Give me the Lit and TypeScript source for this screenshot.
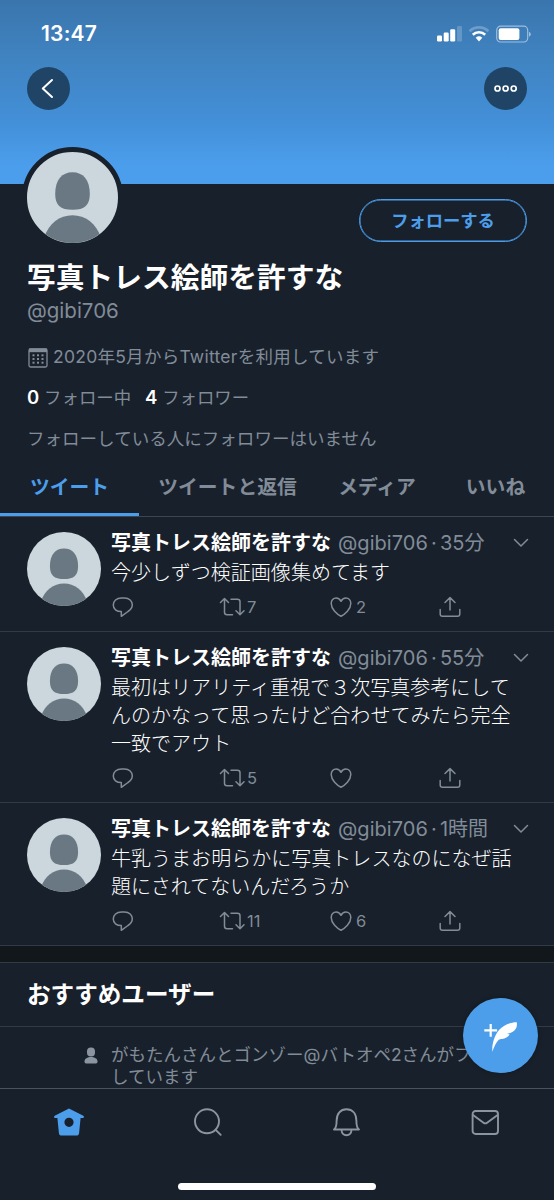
import { LitElement, html, css, svg, nothing } from "lit";
import { customElement, property } from "lit/decorators.js";

interface Tweet {
  age: string;
  lines: string[];
  retweets?: string;
  likes?: string;
}

const NAME = "写真トレス絵師を許すな";
const HANDLE = "@gibi706";

const TWEETS: Tweet[] = [
  { age: "35分", lines: ["今少しずつ検証画像集めてます"], retweets: "7", likes: "2" },
  {
    age: "55分",
    lines: ["最初はリアリティ重視で３次写真参考にして", "んのかなって思ったけど合わせてみたら完全", "一致でアウト"],
    retweets: "5",
  },
  {
    age: "1時間",
    lines: ["牛乳うまお明らかに写真トレスなのになぜ話", "題にされてないんだろうか"],
    retweets: "11",
    likes: "6",
  },
];

@customElement("default-avatar")
class DefaultAvatar extends LitElement {
  static styles = css`
    :host {
      display: block;
      border-radius: 50%;
      overflow: hidden;
      background: #ccd6dd;
    }
    .art {
      display: block;
      width: 100%;
      height: 100%;
    }
  `;
  render() {
    return html`<svg class="art" viewBox="0 0 92 92" fill="#697882">
      <path d="M46 20.500c10.500 0 17.500 7.500 17.500 22 0 11-5 16-17.500 16s-17.500-5-17.500-16c0-14.500 7-22 17.500-22z" />
      <path d="M17.500 86C22 72.500 33 64 46 64s24 8.500 28.500 22v8h-57z" />
    </svg>`;
  }
}

@customElement("tweet-row")
class TweetRow extends LitElement {
  @property({ attribute: false }) tweet!: Tweet;
  static styles = css`
    :host {
      display: flex;
      border-bottom: 1px solid #313b46;
      padding-left: 26.500px;
      color: #818c98;
    }
    .avatar {
      width: 74px;
      height: 74px;
      margin-top: 15px;
      margin-right: 10.500px;
      flex: none;
    }
    .body {
      flex: 1;
      min-width: 0;
      padding-top: 12px;
    }
    .head {
      display: flex;
      align-items: center;
      height: 29px;
      font-size: 20px;
      line-height: 29px;
      white-space: nowrap;
    }
    .name {
      color: #fff;
      font-weight: 700;
      margin-right: 7px;
    }
    .handle {
      letter-spacing: 0.050px;
    }
    .dot {
      width: 12px;
      text-align: center;
    }
    .line {
      height: 28px;
      line-height: 28px;
      font-size: 20.050px;
      font-weight: 300;
      color: #fff;
      white-space: nowrap;
    }
    .text {
      padding-top: 1px;
    }
    .actions {
      display: grid;
      grid-template-columns: 109px 109px 109px 1fr;
      align-items: center;
      height: 24px;
      margin: 8px 0 12px 1px;
    }
    .action {
      display: flex;
      align-items: center;
      height: 24px;
      font-size: 16.500px;
      line-height: 24px;
    }
    .ic {
      width: 22px;
      height: 22px;
      flex: none;
      fill: none;
      stroke: currentColor;
      stroke-width: 1.500;
      stroke-linecap: round;
      stroke-linejoin: round;
    }
    .chevron {
      width: 16px;
      height: 10px;
      margin-left: auto;
      margin-right: 25px;
    }
    .rt {
      width: 26px;
      margin-left: -2px;
    }
    .count {
      margin-left: 2px;
    }
    .likes {
      margin-left: 4px;
    }
  `;
  render() {
    const t = this.tweet;
    return html`
      <default-avatar class="avatar"></default-avatar>
      <div class="body">
        <div class="head">
          <span class="name">${NAME}</span><span class="handle">${HANDLE}</span><span class="dot">·</span><span>${t.age}</span>
          <svg class="ic chevron" viewBox="0 0 16 10"><path d="M1.500 1.500 8 8l6.500-6.500" /></svg>
        </div>
        <div class="text">${t.lines.map((l) => html`<div class="line">${l}</div>`)}</div>
        <div class="actions">
          <span class="action">
            <svg class="ic" viewBox="0 0 22 22">
              <path d="M9.500 2h3C17.200 2 20.300 5 20.300 8.800c0 3-1.600 5-4.300 6.700l-6.700 4.800v-4.700C4.500 15.600 1.300 13 1.300 9S4.500 2 9.500 2z" />
            </svg>
          </span>
          <span class="action">
            <svg class="ic rt" viewBox="0 0 26 22">
              <path d="M1.500 6.500 5.500 2.500l4 4M5.500 2.800v13.400q0 2.500 2.500 2.500h5.500M12 3.300h6.500q2.500 0 2.500 2.500v12.700M17 14.700l4 4 4-4" />
            </svg>
            <span class="count">${t.retweets ?? nothing}</span>
          </span>
          <span class="action">
            <svg class="ic" viewBox="0 0 22 22">
              <path d="M11 20.300C7 18.400 1.200 13.200 1.200 7.600 1.200 4.400 3.300 2 6.200 2 8.400 2 10 3.300 11 5.300 12 3.300 13.600 2 15.800 2c2.900 0 5 2.400 5 5.600 0 5.600-5.800 10.800-9.800 12.700z" />
            </svg>
            <span class="likes">${t.likes ?? nothing}</span>
          </span>
          <span class="action">
            <svg class="ic" viewBox="0 0 22 22">
              <path d="M11 14V2M6 6.500l5-4.900 5 4.900M1.200 13.500v4.500q0 2.300 2.300 2.300h15q2.300 0 2.300-2.300v-4.500" />
            </svg>
          </span>
        </div>
      </div>
    `;
  }
}

const navIcons = [
  svg`<path fill="#4c9eeb" fill-rule="evenodd" d="M16 1.500 30.300 8.700c1.200.7.800 2.300-.5 2.300h-2.200l-1.500 15c-.2 1.800-1.200 2.600-2.800 2.600H8.700c-1.600 0-2.600-.8-2.800-2.600L4.400 11H2.200C.900 11 .500 9.400 1.700 8.700zM16 10.700a4.600 4.600 0 1 0 0 9.200 4.600 4.600 0 0 0 0-9.200z"/>`,
  svg`<g class="ln"><circle cx="15" cy="14.300" r="12"/><path d="m23.700 22.800 5 5"/></g>`,
  svg`<g class="ln"><path d="M4 22.500c2-1.500 2.600-4 2.600-8.500C6.600 6.500 10.500 2.300 16.500 2.300S26.400 6.500 26.400 14c0 4.500.6 7 2.600 8.500zM11.500 23c.3 3.300 2 5.200 5 5.200s4.700-1.900 5-5.200"/></g>`,
  svg`<g class="ln"><rect x="3.600" y="4" width="25.400" height="23" rx="3"/><path d="M4 8l10.500 7.700q1.800 1.300 3.600 0L28.600 8"/></g>`,
];

@customElement("app-root")
class AppRoot extends LitElement {
  static styles = css`
    :host {
      display: flex;
      flex-direction: column;
      position: relative;
      width: 554px;
      height: 1200px;
      overflow: hidden;
      background: #18202b;
      color: #818c98;
      font-family: Inter, "Noto Sans CJK JP", sans-serif;
      font-weight: 400;
    }
    .banner {
      height: 184px;
      flex: none;
      background: linear-gradient(#3a75ad, #4084c2 33%, #438fd8 66%, #4b9eec 90%);
      color: #fff;
    }
    .status {
      display: flex;
      align-items: center;
      justify-content: space-between;
      height: 67px;
      padding: 0 22px 0 41px;
    }
    .time {
      font-size: 21px;
      font-weight: 600;
      line-height: 24px;
      letter-spacing: 0.200px;
    }
    .signals {
      display: block;
      width: 96px;
      height: 20px;
    }
    .controls {
      display: flex;
      justify-content: space-between;
      padding: 0 27px;
    }
    .round {
      display: block;
      width: 43px;
      height: 43px;
    }
    .profile {
      height: 276px;
      flex: none;
      padding: 0 27px;
      white-space: nowrap;
    }
    .top {
      display: flex;
      justify-content: space-between;
      height: 73px;
    }
    .avatar {
      width: 91px;
      height: 91px;
      margin: -37px 0 0 -5px;
      border: 5px solid #18202b;
    }
    .follow {
      width: 168px;
      height: 43px;
      margin: 15px 0 0;
      box-sizing: border-box;
      border: 1.500px solid #4c9eeb;
      border-radius: 22px;
      box-shadow: inset 0 0 0 0.500px #4c9eeb;
      color: #4c9eeb;
      font-size: 17.300px;
      font-weight: 700;
      line-height: 41px;
      text-align: center;
    }
    .name {
      margin: 0;
      color: #fff;
      font-size: 28.750px;
      font-weight: 700;
      line-height: 41px;
      height: 40px;
    }
    .handle {
      font-size: 20.500px;
      line-height: 28px;
      height: 28px;
    }
    .joined {
      display: flex;
      align-items: center;
      height: 26px;
      margin-top: 19px;
      font-size: 17.500px;
      letter-spacing: 0.260px;
      line-height: 28px;
    }
    .cal {
      width: 21px;
      height: 21px;
      margin-right: 5px;
    }
    .counts {
      height: 26px;
      margin-top: 14px;
      font-size: 17.400px;
      line-height: 26px;
    }
    .num {
      color: #fff;
      font-weight: 600;
      font-size: 18.500px;
    }
    .second {
      margin-left: 9px;
    }
    .none {
      height: 26px;
      margin-top: 15px;
      font-size: 17.550px;
      line-height: 28px;
    }
    .tabs {
      display: grid;
      grid-template-columns: 138px 179px 120px 117px;
      height: 56.500px;
      flex: none;
      box-sizing: border-box;
      border-bottom: 1.500px solid #3c4651;
      font-size: 19.800px;
      font-weight: 700;
      line-height: 54px;
      text-align: center;
      white-space: nowrap;
    }
    .active {
      color: #4c9eeb;
      border-bottom: 3px solid #4c9eeb;
      height: 53px;
      width: 139px;
    }
    .feed {
      min-height: 0;
      flex: 1;
      overflow: hidden;
    }
    .gap {
      height: 16.500px;
      background: #12171c;
      border-bottom: 1px solid #313b46;
    }
    .suggest {
      margin: 0;
      padding-left: 27px;
      height: 63px;
      border-bottom: 1px solid #313b46;
      color: #fff;
      font-size: 23.600px;
      font-weight: 700;
      line-height: 64px;
    }
    .social {
      display: flex;
      padding: 17px 0 0 84px;
      font-size: 17.500px;
      line-height: 22px;
      white-space: nowrap;
    }
    .person {
      width: 14px;
      height: 17px;
      margin: 3px 13px 0 0;
      flex: none;
    }
    .nav {
      height: 112px;
      flex: none;
      box-sizing: border-box;
      border-top: 1px solid #4a545f;
      display: flex;
      flex-direction: column;
      align-items: center;
      justify-content: space-between;
      padding: 17.500px 0 10px;
    }
    .items {
      display: grid;
      grid-template-columns: repeat(4, 1fr);
      justify-items: center;
      width: 100%;
    }
    .item {
      width: 32px;
      height: 32px;
    }
    .ln {
      fill: none;
      stroke: #8a95a1;
      stroke-width: 1.900;
      stroke-linecap: round;
      stroke-linejoin: round;
    }
    .homebar {
      width: 198px;
      height: 7.500px;
      border-radius: 4px;
      background: #fff;
    }
    .fab {
      position: absolute;
      right: 16px;
      bottom: 127px;
      width: 75px;
      height: 75px;
      border-radius: 50%;
      background: #4c9eeb;
      box-shadow: 0 0 5px rgba(0, 0, 0, 0.3);
    }
    .quill {
      display: block;
      width: 75px;
      height: 75px;
    }
  `;

  render() {
    return html`
      <header class="banner">
        <div class="status">
          <span class="time">13:47</span>
          <svg class="signals" viewBox="0 0 96 20" fill="#fff">
            <rect x="1" y="11.500" width="5" height="6" rx="1.200" />
            <rect x="7.700" y="8.500" width="5" height="9" rx="1.200" />
            <rect x="14.200" y="5.200" width="5" height="12.300" rx="1.200" />
            <rect x="21" y="2" width="5" height="15.500" rx="1.200" opacity=".2" />
            <g fill="none" stroke="#fff" stroke-width="2.600">
              <path d="M33.600 7.200a13.500 13.500 0 0 1 18.800 0" opacity=".25" />
              <path d="M36.800 10.800a9 9 0 0 1 12.400 0" />
            </g>
            <path d="M43 17.500l-3.300-3.700a5 5 0 0 1 6.600 0z" />
            <rect x="60.700" y="2.200" width="31" height="15.800" rx="4" fill="none" stroke="#fff" stroke-width="1.200" opacity=".5" />
            <rect x="62.700" y="4.200" width="20.700" height="11.800" rx="2" />
            <path d="M93 8c2.400.6 2.400 4 0 4.600z" opacity=".5" />
          </svg>
        </div>
        <div class="controls">
          <svg class="round" viewBox="0 0 43 43">
            <circle cx="21.500" cy="21.500" r="21.500" fill="#1f4466" />
            <path d="M25 13 15.800 21.500 25 30" fill="none" stroke="#fff" stroke-width="2" stroke-linecap="round" stroke-linejoin="round" />
          </svg>
          <svg class="round" viewBox="0 0 43 43">
            <circle cx="21.500" cy="21.500" r="21.500" fill="#1f4466" />
            <g fill="none" stroke="#fff" stroke-width="1.700">
              <circle cx="13.500" cy="21.500" r="2.500" /><circle cx="21.600" cy="21.500" r="2.500" /><circle cx="29.700" cy="21.500" r="2.500" />
            </g>
          </svg>
        </div>
      </header>

      <section class="profile">
        <div class="top">
          <default-avatar class="avatar"></default-avatar>
          <div class="follow">フォローする</div>
        </div>
        <h1 class="name">${NAME}</h1>
        <div class="handle">${HANDLE}</div>
        <div class="joined">
          <svg class="cal" viewBox="0 0 21 21" fill="#818c98">
            <rect x="2" y="2" width="18" height="18" rx="1.500" fill="none" stroke="#818c98" stroke-width="1.300" />
            <path d="M2 1.500h18v3.700H2z" />
            ${[7.3, 11, 14.7].map((y) => [6.5, 11, 15.5].map((x) => svg`<rect x=${x - 1} y=${y} width="2" height="2"/>`))}
          </svg>
          <span>2020年5月からTwitterを利用しています</span>
        </div>
        <div class="counts">
          <span class="num">0</span> フォロー中 <span class="num second">4</span> フォロワー
        </div>
        <div class="none">フォローしている人にフォロワーはいません</div>
      </section>

      <nav class="tabs">
        <span class="active">ツイート</span><span>ツイートと返信</span><span>メディア</span><span>いいね</span>
      </nav>

      <main class="feed">
        ${TWEETS.map((t) => html`<tweet-row .tweet=${t}></tweet-row>`)}
        <div class="gap"></div>
        <h2 class="suggest">おすすめユーザー</h2>
        <div class="social">
          <svg class="person" viewBox="0 0 14 17" fill="#8a95a1">
            <rect x="3" y="0.500" width="8" height="9" rx="3.800" />
            <path d="M.5 14.500C.5 11.500 3.500 10 7 10s6.500 1.500 6.500 4.500q0 2-1.500 2H2q-1.500 0-1.500-2z" />
          </svg>
          <div>
            <div>がもたんさんとゴンゾー@バトオペ2さんがフォロー</div>
            <div>しています</div>
          </div>
        </div>
      </main>

      <footer class="nav">
        <div class="items">
          ${navIcons.map((i) => html`<svg class="item" viewBox="0 0 32 32">${i}</svg>`)}
        </div>
        <div class="homebar"></div>
      </footer>

      <div class="fab">
        <svg class="quill" viewBox="0 0 75 75" fill="#fff">
          <path d="M21.300 32.300h12.800M27.700 26v12.800" fill="none" stroke="#fff" stroke-width="2.200" />
          <path d="M29.300 53.700C28.800 46 31.500 37 36.500 31.500 41 26.700 47 24.300 53.800 24.200c.3 3 0 5-1.200 6.800-1.800 2.700-5 4.300-8.600 4.700l2.700.8c-1.700 2.700-4.500 4.100-7.700 4.400-1.500.1-2.500.2-3.300.8-2.800 2.700-4.600 7.500-6.400 12z" />
        </svg>
      </div>
    `;
  }
}
